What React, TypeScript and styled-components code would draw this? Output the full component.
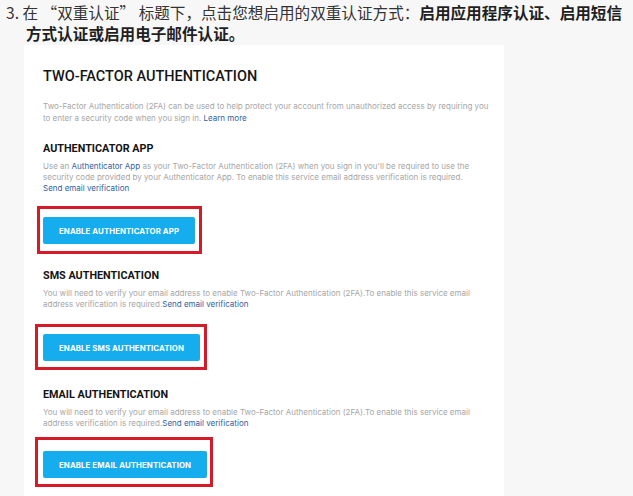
import React from "react";
import styled, { createGlobalStyle } from "styled-components";

const GlobalStyle = createGlobalStyle`
  html, body {
    margin: 0;
    padding: 0;
    background: #f7f7f7;
    overflow: hidden;
  }
`;

const Page = styled.div`
  width: 633px;
  height: 496px;
  overflow: hidden;
`;

const Step = styled.p`
  margin: 0;
  padding: 2px 4px 0 26px;
  text-indent: -20px;
  font-family: "Noto Sans CJK SC", "Liberation Sans", sans-serif;
  font-size: 15.6px;
  line-height: 21px;
  color: #333;

  strong {
    font-weight: 700;
    color: #1f1f1f;
  }
`;

const Card = styled.div`
  margin: 1px 0 0 24px;
  width: 480px;
  height: 460px;
  background: #fff;
  padding: 23px 14px 0 19px;
  box-sizing: border-box;
  font-family: Inter, "Liberation Sans", sans-serif;
`;

const Title = styled.h1`
  margin: 0;
  font-family: Roboto, "Liberation Sans", sans-serif;
  font-size: 14.5px;
  line-height: 18px;
  font-weight: 500;
  color: #151515;
`;

const Intro = styled.p`
  margin: 15px 0 0;
  font-size: 8px;
  line-height: 11.5px;
  color: #a6a6a6;
`;

const Section = styled.div`
  display: flex;
  flex-direction: column;
  align-items: flex-start;
`;

const SectionTitle = styled.h2<{ $top: number }>`
  margin: ${p => p.$top}px 0 0;
  font-family: Roboto, "Liberation Sans", sans-serif;
  font-size: 10.8px;
  line-height: 14px;
  font-weight: 700;
  color: #141414;
`;

const Text = styled.p`
  margin: 5px 0 0;
  font-size: 8px;
  line-height: 11px;
  color: #a6a6a6;
`;

const Link = styled.span`
  color: #2f62a3;
`;

const Highlight = styled.div<{ $top: number; $pad: [number, number, number, number] }>`
  margin: ${p => p.$top}px 0 0 ${p => -(p.$pad[3] + 3)}px;
  border: 3px solid #d71a28;
  padding: ${p => p.$pad.map(v => `${v}px`).join(" ")};
`;

const Button = styled.div`
  display: flex;
  align-items: center;
  height: 27px;
  padding: 0 16px;
  background: #16adee;
  border-radius: 2px;
  color: #fff;
  font-size: 7.8px;
  font-weight: 700;
  letter-spacing: 0.1px;
  white-space: nowrap;
`;

const VERIFY_TEXT =
  "You will need to verify your email address to enable Two-Factor Authentication (2FA).To enable this service email address verification is required.";

const SECTIONS: Array<{
  title: string;
  lines: React.ReactNode;
  button: string;
  titleTop: number;
  top: number;
  pad: [number, number, number, number];
}> = [
  {
    title: "AUTHENTICATOR APP",
    lines: (
      <>
        Use an <Link>Authenticator App</Link> as your Two-Factor Authentication (2FA) when you sign in
        you'll be required to use the security code provided by your Authenticator App. To enable
        this service email address verification is required.
        <br />
        <Link>Send email verification</Link>
      </>
    ),
    button: "ENABLE AUTHENTICATOR APP",
    titleTop: 18,
    top: 12,
    pad: [8, 4, 7, 3],
  },
  {
    title: "SMS AUTHENTICATION",
    lines: (
      <>
        {VERIFY_TEXT}
        <Link>Send email verification</Link>
      </>
    ),
    button: "ENABLE SMS AUTHENTICATION",
    titleTop: 15,
    top: 14,
    pad: [7, 4, 6, 5],
  },
  {
    title: "EMAIL AUTHENTICATION",
    lines: (
      <>
        {VERIFY_TEXT}
        <Link>Send email verification</Link>
      </>
    ),
    button: "ENABLE EMAIL AUTHENTICATION",
    titleTop: 18,
    top: 8,
    pad: [11, 3, 6, 5],
  },
];

const App = () => {
  return (
    <Page>
      <GlobalStyle />
      <Step>
        3. 在 “双重认证” 标题下，点击您想启用的双重认证方式：
        <strong>启用应用程序认证、启用短信方式认证或启用电子邮件认证。</strong>
      </Step>

      <Card>
        <Title>TWO-FACTOR AUTHENTICATION</Title>
        <Intro>
          Two-Factor Authentication (2FA) can be used to help protect your account from
          unauthorized access by requiring you to enter a security code when you sign in.{" "}
          <Link>Learn more</Link>
        </Intro>

        {SECTIONS.map(({ title, lines, button, titleTop, top, pad }) => (
          <Section key={title}>
            <SectionTitle $top={titleTop}>{title}</SectionTitle>
            <Text>{lines}</Text>
            <Highlight $top={top} $pad={pad}>
              <Button>{button}</Button>
            </Highlight>
          </Section>
        ))}
      </Card>
    </Page>
  );
};

export default App;
